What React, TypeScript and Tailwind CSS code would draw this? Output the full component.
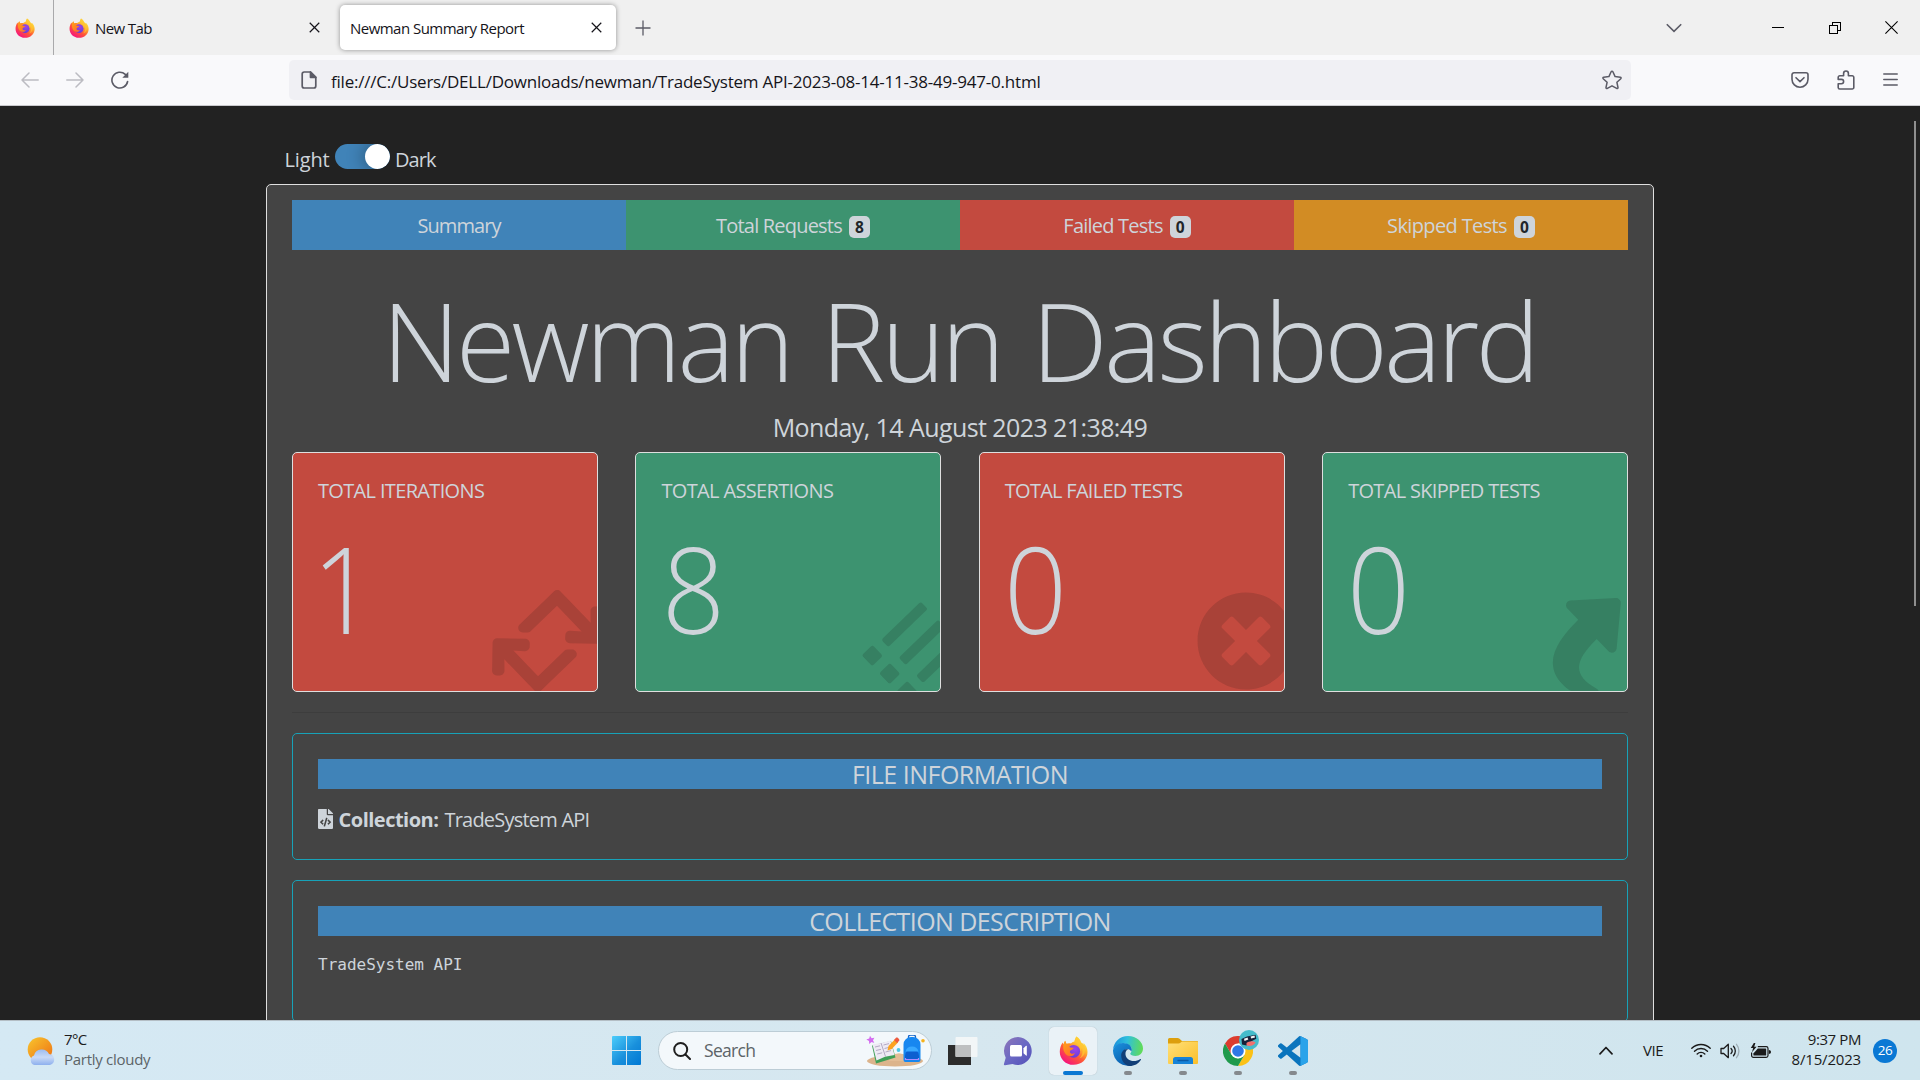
import React from 'react';
import { FaFileCode, FaList, FaRetweet, FaShare, FaTimesCircle } from 'react-icons/fa';

type IconProps = { className?: string };

function FirefoxLogo({ id, className = '' }: IconProps & { id: string }) {
  return (
    <svg viewBox="0 0 30 30" className={className}>
      <defs>
        <linearGradient id={`${id}-body`} x1="0.85" y1="0.1" x2="0.25" y2="0.95">
          <stop offset="0" stopColor="#fff44f" />
          <stop offset="0.3" stopColor="#ffb52e" />
          <stop offset="0.6" stopColor="#ff5a36" />
          <stop offset="1" stopColor="#f5157c" />
        </linearGradient>
        <linearGradient id={`${id}-fox`} x1="0" y1="0" x2="1" y2="1">
          <stop offset="0" stopColor="#ffa21a" />
          <stop offset="1" stopColor="#ff6a2b" />
        </linearGradient>
        <radialGradient id={`${id}-globe`} cx="0.6" cy="0.3" r="0.8">
          <stop offset="0" stopColor="#a142e8" />
          <stop offset="1" stopColor="#5b3fd6" />
        </radialGradient>
      </defs>
      <path
        fill={`url(#${id}-body)`}
        d="M18 .6c2.800 1.700 4.200 3.900 4.900 6.300 1.200.5 2.100 1.400 2.800 2.400-.1-.9-.3-1.500-.4-2.200 2.500 2.400 4.200 5.800 4.200 9.400C29.500 24 23.200 29.800 15 29.800S.8 23.700.8 16.200c0-3.700 1.200-7.200 3-9.600l.7 2.200L6.300 5l1.500 3.300c1.500-.7 3-.8 4.500-.5C13.500 6.500 15 6 16 5.800 16.200 4 17 2 18 .6z"
      />
      <circle cx="15.200" cy="15.800" r="6.600" fill={`url(#${id}-globe)`} />
      <path
        fill={`url(#${id}-fox)`}
        d="M4.500 8.800 6.300 5l1.600 3.200c1.600-.7 3.200-.6 4.700 0-1.200.7-2 1.700-2.100 2.800.8.9 2.700.9 4.700 1.100-.3 1.500-2 2.100-3.400 2.900-.6.500-.4 1.400-.5 2 1.300 1.600 3.400 1.700 5.200.5-1 2.600-3.200 3.700-5.400 3.300-4.700-.6-7.500-5.700-6.600-12z"
      />
      <path
        fill="#ffc531"
        d="M16 5.800c3.800 1.500 6.400 5 6.100 9.700 1.100-1.200 1.500-2.500 1.500-3.800 1.700 4.300.6 9-2.500 11.600 5.200-2 6.700-7.200 5.400-12.500-.9-2.300-2.300-3.500-3.800-4.300C22 4.200 20.500 2 18 .6 17 2.300 16.300 4 16 5.800z"
        opacity="0.75"
      />
    </svg>
  );
}

function CrossIcon({ className = '' }: IconProps) {
  return (
    <svg viewBox="0 0 12 12" className={className} fill="none" stroke="currentColor" strokeWidth="1.300">
      <path d="M.8.8l10.400 10.400M11.200.8.8 11.200" />
    </svg>
  );
}

function TabStrip() {
  return (
    <div className="flex h-[55px] items-center bg-[#f0f0f0] text-[15px] text-[#15141a]">
      <div className="flex h-full w-[54px] items-center border-r border-[#a9a9ab] pl-[15px]">
        <FirefoxLogo id="ff-pin" className="size-5" />
      </div>
      <div className="flex h-full w-[286px] items-center pl-[15px] pr-[20px]">
        <FirefoxLogo id="ff-tab" className="size-5" />
        <span className="ml-[6px] pt-[2px] tracking-[-0.6px]">New Tab</span>
        <CrossIcon className="ml-auto size-[11px]" />
      </div>
      <div className="flex h-[45px] w-[276px] items-center rounded-[5px] bg-white pl-[10px] pr-[14px] shadow-[0_0_5px_rgba(0,0,0,0.4)]">
        <span className="pt-[2px] tracking-[-0.53px]">Newman Summary Report</span>
        <CrossIcon className="ml-auto size-[11px]" />
      </div>
      <svg viewBox="0 0 16 16" className="ml-[19px] size-4" fill="none" stroke="#5b5b66" strokeWidth="1.300">
        <path d="M8 .5v15M.5 8h15" />
      </svg>
      <div className="ml-auto flex items-center pr-[22px]">
        <svg viewBox="0 0 16 10" className="mr-[90px] h-[10px] w-4" fill="none" stroke="#5b5b66" strokeWidth="1.600">
          <path d="M.8 1.200 8 8.400l7.200-7.200" />
        </svg>
        <svg viewBox="0 0 12 12" className="mr-[45px] size-3" fill="none" stroke="#000" shapeRendering="crispEdges">
          <path d="M0 5.500h12" />
        </svg>
        <svg viewBox="0 0 12 12" className="mr-[44px] size-3" fill="none" stroke="#000" shapeRendering="crispEdges">
          <path d="M.5 3.500h8v8h-8zM3.500 3V.5h8v8H9" />
        </svg>
        <svg viewBox="0 0 13 13" className="size-[13px]" fill="none" stroke="#000" strokeWidth="1.100">
          <path d="M.4.4l12.200 12.200M12.600.4.4 12.600" />
        </svg>
      </div>
    </div>
  );
}

function AddressRow() {
  return (
    <div className="flex h-[51px] items-center border-b border-[#c9c9cd] bg-[#f9f9fb] pl-[21px] text-[#5b5b66]">
      <svg viewBox="0 0 18 18" className="size-[18px] text-[#bcbcc2]" fill="none" stroke="currentColor" strokeWidth="1.500" strokeLinecap="round" strokeLinejoin="round">
        <path d="M17.200 9H1M8 2 1 9l7 7" />
      </svg>
      <svg viewBox="0 0 18 18" className="ml-[27px] size-[18px] text-[#bcbcc2]" fill="none" stroke="currentColor" strokeWidth="1.500" strokeLinecap="round" strokeLinejoin="round">
        <path d="M.8 9H17M10 2l7 7-7 7" />
      </svg>
      <svg viewBox="0 0 18 18" className="ml-[27px] size-[18px]" fill="none" stroke="currentColor" strokeWidth="1.600" strokeLinecap="round">
        <path d="M16.600 10.500A7.900 7.900 0 1 1 14.300 3.400" />
        <path d="M17.300.8v5.900h-6z" fill="currentColor" stroke="none" />
      </svg>
      <div className="ml-[160px] flex h-10 w-[1342px] items-center rounded-[5px] bg-[#f0f0f4] pl-3 pr-[9px]">
        <svg viewBox="0 0 16 18" className="h-[18px] w-4 shrink-0" fill="none" stroke="currentColor" strokeWidth="1.700" strokeLinejoin="round">
          <path d="M9.500 1H3.200A2 2 0 0 0 1.200 3v12a2 2 0 0 0 2 2h9.600a2 2 0 0 0 2-2V6.300z" />
          <path d="M9.500 1v5.300h5.300z" fill="currentColor" />
        </svg>
        <span className="ml-[14px] whitespace-nowrap pt-[3px] text-[17px] tracking-[-0.22px] text-[#15141a]">
          file:///C:/Users/DELL/Downloads/newman/TradeSystem API-2023-08-14-11-38-49-947-0.html
        </span>
        <svg viewBox="0 0 20 20" className="ml-auto size-5 shrink-0" fill="none" stroke="currentColor" strokeWidth="1.500" strokeLinejoin="round">
          <path d="M10 1.200c.4 0 .7.2.9.600l2.200 4.800 5.200.6c.8.100 1.100 1 .5 1.500l-3.900 3.600 1.100 5.200c.1.800-.7 1.300-1.300.9L10 15.800l-4.700 2.600c-.6.400-1.400-.1-1.300-.9l1.100-5.200-3.900-3.600C.6 8.200.9 7.300 1.700 7.200l5.200-.6L9.100 1.800c.2-.4.5-.6.9-.6z" />
        </svg>
      </div>
      <div className="ml-auto flex items-center pr-[22px]">
        <svg viewBox="0 0 18 18" className="mr-[28px] size-[18px]" fill="none" stroke="currentColor" strokeWidth="1.600" strokeLinecap="round" strokeLinejoin="round">
          <path d="M3 1.800h12a2 2 0 0 1 2 2v4.400a8 8 0 0 1-16 0V3.800a2 2 0 0 1 2-2z" />
          <path d="M5 6.700l4 3.900 4-3.900" />
        </svg>
        <svg viewBox="0 0 18 20" className="mr-[28px] h-5 w-[18px]" fill="none" stroke="currentColor" strokeWidth="1.600" strokeLinejoin="round">
          <path d="M6.600 5.800V3.400a2.400 2.400 0 0 1 4.800 0v2.400h3.800a1.600 1.600 0 0 1 1.600 1.600v10a1.600 1.600 0 0 1-1.600 1.600H2.800a1.600 1.600 0 0 1-1.600-1.600v-3.600h3.200a2.200 2.200 0 0 0 0-4.400H1.200V7.400a1.600 1.600 0 0 1 1.600-1.600z" />
        </svg>
        <svg viewBox="0 0 15 14" className="h-[14px] w-[15px]" fill="none" stroke="currentColor" strokeWidth="1.500" strokeLinecap="round">
          <path d="M.8 1h13.400M.8 6.500h13.400M.8 12h13.400" />
        </svg>
      </div>
    </div>
  );
}

const tabs = [
  { label: 'Summary', bg: 'bg-[#4083b8]', tracking: 'tracking-[-0.93px]' },
  { label: 'Total Requests', count: '8', bg: 'bg-[#3d9370]', tracking: 'tracking-[-0.8px]' },
  { label: 'Failed Tests', count: '0', bg: 'bg-[#c34a3f]', tracking: 'tracking-[-0.78px]' },
  { label: 'Skipped Tests', count: '0', bg: 'bg-[#d28c24]', tracking: 'tracking-[-0.63px]' },
];

const stats = [
  { label: 'TOTAL ITERATIONS', value: '1', bg: 'bg-[#c34a3f]', tracking: 'tracking-[-0.66px]', Icon: FaRetweet, icon: 'right-[-13.5px] h-[100px] w-[125px] rotate-[-44deg]', nudge: '-ml-[6px]' },
  { label: 'TOTAL ASSERTIONS', value: '8', bg: 'bg-[#3d9370]', tracking: 'tracking-[-0.64px]', Icon: FaList, icon: 'right-[-12.5px] size-[80px] rotate-[-44deg]', nudge: 'ml-[1px]' },
  { label: 'TOTAL FAILED TESTS', value: '0', bg: 'bg-[#c34a3f]', tracking: 'tracking-[-0.72px]', Icon: FaTimesCircle, icon: 'right-[-12.5px] size-[100px]', nudge: '-ml-px' },
  { label: 'TOTAL SKIPPED TESTS', value: '0', bg: 'bg-[#3d9370]', tracking: 'tracking-[-0.68px]', Icon: FaShare, icon: 'right-[-12.5px] size-[100px] rotate-[-44deg]', nudge: '-ml-px' },
];

function Report() {
  return (
    <div className="relative h-[914px] overflow-hidden bg-[#222222] pt-[38px] text-[20px] text-[#ced4da]">
      <div className="absolute right-[4px] top-[15px] h-[485px] w-[2px] bg-[#8f8f8f]" />
      <div className="flex h-[30px] pl-[284.5px] leading-[32px]">
        <span className="w-[50.5px] tracking-[-0.15px]">Light</span>
        <div className="flex h-[25px] w-[55px] justify-end overflow-hidden rounded-full bg-[#4083b8]">
          <div className="size-[25px] rounded-full bg-white shadow-[-2px_0_15px_2px_rgba(0,0,0,0.25)]" />
        </div>
        <span className="ml-[5px] tracking-[-0.9px]">Dark</span>
      </div>
      <div className="mx-[266px] mt-[10px] h-[1200px] rounded-[5px] border border-[#dfdfdf] bg-[#444444] px-[25px] pt-[15px]">
        <nav className="grid h-[50px] grid-cols-4">
          {tabs.map((tab) => (
            <div key={tab.label} className={`flex items-center justify-center leading-[30px] ${tab.bg}`}>
              <span className={`pt-[2px] ${tab.tracking}`}>{tab.label}</span>
              {tab.count && (
                <span className="ml-[7px] mt-[4px] flex h-[22px] w-[21px] items-center justify-center rounded-[5px] bg-[#ced4da] text-[15.5px] font-bold text-[#212529]">
                  {tab.count}
                </span>
              )}
            </div>
          ))}
        </nav>
        <h1 className="mt-[25px] h-[130px] whitespace-nowrap pr-[2px] text-center text-[108px] font-light leading-[131px] tracking-[-3.8px] [word-spacing:6px]">
          Newman Run Dashboard
        </h1>
        <p className="mt-[7px] text-center text-[25px] leading-[30px] tracking-[-0.58px]">Monday, 14 August 2023 21:38:49</p>
        <div className="mt-[10px] grid grid-cols-4 gap-[37.5px]">
          {stats.map(({ label, value, bg, tracking, Icon, icon, nudge }) => (
            <div key={label} className={`relative h-[240px] overflow-hidden rounded-[5px] border border-[#dfdfdf] pl-[25px] pt-[23px] ${bg}`}>
              <h6 className={`leading-[30px] ${tracking}`}>{label}</h6>
              <div className={`mt-[10px] origin-left scale-x-[0.92] text-[120px] font-light leading-[144px] ${nudge}`}>{value}</div>
              <Icon className={`absolute bottom-0 text-[rgba(20,20,20,0.15)] ${icon}`} />
            </div>
          ))}
        </div>
        <div className="mt-[20px] h-px bg-[#3d3d3d]" />
        <section className="mt-[20px] h-[127px] rounded-[5px] border border-[#17a2b8] px-[25px] pt-[25px]">
          <h5 className="h-[30px] bg-[#4083b8] text-center text-[25px] leading-[30px] tracking-[-0.5px]">FILE INFORMATION</h5>
          <div className="mt-[15px] flex h-[30px] items-center leading-[30px]">
            <FaFileCode className="h-5 w-[15px]" />
            <strong className="ml-[5.5px] pt-[2px] font-bold tracking-[-0.5px]">Collection:</strong>
            <span className="ml-[6px] pt-[2px] tracking-[-0.78px]">TradeSystem API</span>
          </div>
        </section>
        <section className="mt-[20px] h-[142px] rounded-[5px] border border-[#17a2b8] px-[25px] pt-[25px]">
          <h5 className="h-[30px] bg-[#4083b8] text-center text-[25px] leading-[30px] tracking-[-0.58px]">COLLECTION DESCRIPTION</h5>
          <pre className="mt-[16px] font-['DejaVu_Sans_Mono',monospace] text-[16px] leading-[26px]">TradeSystem API</pre>
        </section>
      </div>
    </div>
  );
}

function WeatherIcon() {
  return (
    <svg viewBox="0 0 29 28" className="h-7 w-[29px]">
      <defs>
        <linearGradient id="sun" x1="0.1" y1="0.1" x2="0.8" y2="0.9">
          <stop offset="0" stopColor="#f7bd2b" />
          <stop offset="1" stopColor="#ef7a16" />
        </linearGradient>
        <linearGradient id="cloud" x1="0" y1="0" x2="0" y2="1">
          <stop offset="0" stopColor="#9dbcf0" />
          <stop offset="0.5" stopColor="#c9daf6" />
          <stop offset="1" stopColor="#8eb0ee" />
        </linearGradient>
      </defs>
      <circle cx="13" cy="12.500" r="12.300" fill="url(#sun)" />
      <path fill="url(#cloud)" d="M7.500 28a5 5 0 0 1-.5-9.500 8 8 0 0 1 15-1.500A5.600 5.600 0 0 1 23 28z" />
    </svg>
  );
}

function StartIcon() {
  return (
    <svg viewBox="0 0 29 29" className="size-[29px]">
      <defs>
        <linearGradient id="start" x1="0" y1="0" x2="1" y2="1">
          <stop offset="0" stopColor="#4ccdfb" />
          <stop offset="0.550" stopColor="#1990dc" />
          <stop offset="1" stopColor="#0078d4" />
        </linearGradient>
      </defs>
      <path fill="url(#start)" d="M1 0h13v13.900H0V1a1 1 0 0 1 1-1zM15 0h13a1 1 0 0 1 1 1v12.900H15zM0 14.900h14V29H1a1 1 0 0 1-1-1zM15 14.900h14V28a1 1 0 0 1-1 1H15z" />
    </svg>
  );
}

function SearchArt() {
  return (
    <svg viewBox="0 0 60 32" className="h-8 w-[60px]">
      <ellipse cx="30" cy="26" rx="28" ry="5.500" fill="#dcb48c" />
      <path d="M22 20.500 34 18.200 52 22v4H24z" fill="#e3bd96" />
      <path d="M7 10.500 26 6l4.500 16.500-19.500 6z" fill="#3f9f57" />
      <path d="M7.500 9.500 16 8l9.500-2.500 4 14.500-9.500 1.800-8.500 3.800z" fill="#eeeaf4" />
      <path d="M16 8l4.500 13.500M10 12l5-1.200M11 15.500l5-1.200M12.200 19l5-1.200M18.500 10l5.500-1.400M19.500 13.500l5.500-1.400M20.500 17l5.500-1.400" stroke="#a49ab8" strokeWidth="0.800" fill="none" />
      <path d="M22.500 15.500l1-4.500L30 4.200l3.200 3-6.400 6.800z" fill="#fca321" />
      <path d="M29 5l2-2.200c1.300-1 4 1.500 3.200 3L32 8z" fill="#ee5b3f" />
      <path d="M5 .8l1.600 2.400 2.800-.5L8 5.300l1.300 2.600-2.800-.8L4.200 9 4 6 1.300 4.600l2.900-1z" fill="#d36cf0" />
      <circle cx="33.500" cy="15" r="1.900" fill="#4cc9e8" />
      <circle cx="58" cy="5.800" r="1.800" fill="#f6b21b" />
      <path d="M43.500 3V1.800A2 2 0 0 1 45.500 0h3a2 2 0 0 1 2 1.800V3" fill="none" stroke="#1464c8" strokeWidth="1.300" />
      <path d="M38.500 9.500A7.500 7.500 0 0 1 46 2h2a7.500 7.500 0 0 1 7.500 7.500V25a2 2 0 0 1-2 2h-13a2 2 0 0 1-2-2z" fill="#1787f0" />
      <path d="M40 21a7 7 0 0 1 14 0v3.500H40z" fill="#0d5fd0" />
      <path d="M40.500 16.500a6.700 6.700 0 0 1 13 0" fill="#37a8ff" />
      <path d="M40.500 23v1.500h13V23" fill="none" stroke="#a98bff" strokeWidth="1.200" />
    </svg>
  );
}

function TaskViewIcon() {
  return (
    <svg viewBox="0 0 30 30" className="size-[30px]">
      <path fill="#2c2c2c" d="M0 9h23v20H0z" />
      <rect x="7.500" y="1" width="22" height="20" rx="1" fill="#f4f6f7" opacity="0.930" />
      <path fill="#bdbfc0" d="M7.500 9H23v12H8.500a1 1 0 0 1-1-1z" />
    </svg>
  );
}

function ChatIcon() {
  return (
    <svg viewBox="0 0 30 30" className="size-[30px]">
      <defs>
        <linearGradient id="chat" x1="0" y1="0" x2="1" y2="1">
          <stop offset="0" stopColor="#8f77b8" />
          <stop offset="0.500" stopColor="#6a68c4" />
          <stop offset="1" stopColor="#5350b8" />
        </linearGradient>
      </defs>
      <path fill="url(#chat)" d="M15 1a14 14 0 1 1-5.500 27L2 29.200c-1 .1-1.400-.6-1-1.500l1.700-6A14 14 0 0 1 15 1z" />
      <rect x="7" y="9" width="12" height="11.500" rx="1.500" fill="#fff" />
      <path fill="#fff" d="M20.500 12.300 23 9.800c.4-.3.800-.1.800.4v9c0 .5-.4.700-.8.400l-2.500-2.400z" />
    </svg>
  );
}

function EdgeIcon() {
  return (
    <svg viewBox="0 0 30 30" className="size-[30px]">
      <defs>
        <linearGradient id="edge-top" x1="0" y1="0.400" x2="1" y2="0.500">
          <stop offset="0" stopColor="#1a8fdc" />
          <stop offset="0.450" stopColor="#2fc0dc" />
          <stop offset="1" stopColor="#62dc55" />
        </linearGradient>
        <linearGradient id="edge-mid" x1="0" y1="0" x2="0.600" y2="1">
          <stop offset="0" stopColor="#1b93df" />
          <stop offset="1" stopColor="#0b5cab" />
        </linearGradient>
      </defs>
      <path fill="url(#edge-top)" d="M0 14C.6 6 6.800 0 15 0c8.500 0 15 6 15 12.500 0 4.500-3.300 7.500-7.500 7.500-3 0-5.300-1-5.300-2.200 0-.7 1.600-1.600 1.600-4.300C18.800 10 15 7.500 10.500 7.500 5.500 7.500 1.500 10 0 14z" />
      <path fill="url(#edge-mid)" d="M0 14.500C.8 10 5 7 10 7c5 0 8.800 2.800 8.800 6.500 0 .8-.2 1.500-.5 2-.8-1.600-2.300-2.500-4-2.500-2.500 0-4 2.500-4 5.500 0 5 4 9.500 10 10.200A15 15 0 0 1 0 14.500z" />
      <path fill="#123f78" d="M15.200 13c-2 1-3 3-2.700 5.500.5 4 4 6.500 8.200 6.500 2.500 0 4.800-.8 6.200-1.800.8-.4 1.300.1.900.8C25.500 27.800 21.500 30 16.500 30c-4-.3-8.300-5-8.300-10.500 0-3.800 2.800-6.900 7-6.500z" />
    </svg>
  );
}

function ExplorerIcon() {
  return (
    <svg viewBox="0 0 30 30" className="size-[30px]">
      <defs>
        <linearGradient id="folder" x1="0" y1="0" x2="1" y2="1">
          <stop offset="0" stopColor="#ffe07a" />
          <stop offset="1" stopColor="#fbbf2a" />
        </linearGradient>
      </defs>
      <path fill="#dd9f0d" d="M0 3.500A1.500 1.500 0 0 1 1.500 2h8c.7 0 1.200.2 1.700.6L14 5h15a1 1 0 0 1 1 1v8H0z" />
      <path fill="url(#folder)" d="M0 7.500h10.500c.8 0 1.300-.2 1.900-.7L14 5.500h15a1 1 0 0 1 1 1V27a1 1 0 0 1-1 1H1a1 1 0 0 1-1-1z" />
      <path fill="#1783d8" d="M5 28v-4.500A2.500 2.500 0 0 1 7.500 21h15a2.500 2.500 0 0 1 2.500 2.500V28z" />
      <path d="M10 24.500h10" stroke="#0c5aa5" strokeWidth="1.300" strokeLinecap="round" />
    </svg>
  );
}

function ChromeIcon() {
  return (
    <div className="relative size-[30px]">
      <svg viewBox="0 0 30 30" className="size-[30px]">
        <path fill="#dc3c2e" d="M15 15 2 7.500A15 15 0 0 1 28 7.500H15z" />
        <path fill="#dc3c2e" d="M2 7.500 8.500 18.800 15 7.500z" />
        <path fill="#fbc116" d="M28 7.500A15 15 0 0 1 15 30l6.500-11.200L15 7.500z" />
        <path fill="#1f9a4c" d="M15 30A15 15 0 0 1 2 7.500l6.500 11.300L15 22.500l6.500-3.700z" />
        <circle cx="15" cy="15" r="7.500" fill="#fff" />
        <circle cx="15" cy="15" r="5.800" fill="#2f78e6" />
      </svg>
      <svg viewBox="0 0 20 20" className="absolute left-[16px] top-[-6px] size-5">
        <circle cx="10" cy="10" r="10" fill="#45bccb" />
        <path fill="#16213a" d="M2.500 9 8 6.500l8.500-1.800.8 4-5.300 2.800-4.500 4-4.500-1z" />
        <path fill="#f3f4f5" d="M5 8.800 8.500 7.500l.8 2-3.800 1.500zM11.500 6.500l4-1 .5 2-3.800 1z" />
        <path fill="#f0706e" d="M7.500 13c2-2 6.500-2.600 9-.8-.8 3.200-5.500 4.500-9 3.300z" />
      </svg>
    </div>
  );
}

function CodeIcon() {
  return (
    <svg viewBox="0 0 24 24" className="size-[30px]">
      <path
        fill="#0a74bd"
        d="M23.150 2.587 18.210.210a1.494 1.494 0 0 0-1.705.290l-9.460 8.630-4.120-3.128a.999.999 0 0 0-1.276.057L.327 7.261A1 1 0 0 0 .326 8.740L3.899 12 .326 15.260a1 1 0 0 0 .001 1.479L1.650 17.940a.999.999 0 0 0 1.276.057l4.120-3.128 9.460 8.630a1.492 1.492 0 0 0 1.704.290l4.942-2.377A1.500 1.500 0 0 0 24 20.060V3.939a1.500 1.500 0 0 0-.850-1.352zm-5.146 14.861L10.826 12l7.178-5.448v10.896z"
      />
      <path fill="#2aa3ea" d="M18.004 0.150 23.150 2.587A1.500 1.500 0 0 1 24 3.939V20.060a1.500 1.500 0 0 1-.850 1.352L18.210 23.789 18.004 23.850z" />
    </svg>
  );
}

function TaskTile({ children, state }: { children: React.ReactNode; state?: 'active' | 'open' }) {
  return (
    <div className={`relative flex size-12 items-center justify-center rounded-[5px] ${state === 'active' ? 'bg-[#eaf2f7] shadow-[0_0_1px_rgba(0,0,0,0.25)]' : ''}`}>
      {children}
      {state === 'active' && <div className="absolute bottom-0 left-[14px] h-1 w-5 rounded-full bg-[#0b78d3]" />}
      {state === 'open' && <div className="absolute bottom-0 left-5 h-1 w-2 rounded-full bg-[#85898d]" />}
    </div>
  );
}

function Taskbar() {
  return (
    <div className="flex h-[60px] items-center border-t border-[#b4bec5] bg-linear-to-r from-[#d5e9f4] via-[#d6e7ef] to-[#cfe5ee] text-[15px] text-[#1b1b1b]">
      <div className="flex w-[612px] items-center pl-[27px]">
        <WeatherIcon />
        <div className="ml-[8px] pb-[4px] leading-[20px]">
          <div className="tracking-[-0.6px]">7°C</div>
          <div className="tracking-[-0.28px] text-[#5c6468]">Partly cloudy</div>
        </div>
      </div>
      <StartIcon />
      <div className="ml-[17px] flex h-[39px] w-[274px] items-center rounded-full border border-[#bccdd6] bg-[#f3f8fb] pl-[14px] pr-[6px]">
        <svg viewBox="0 0 18 18" className="size-[18px]" fill="none" stroke="#1f1f1f" strokeWidth="2" strokeLinecap="round">
          <circle cx="7.700" cy="7.500" r="6.500" />
          <path d="M12.500 12.500 17 17" />
        </svg>
        <span className="ml-[13px] pb-px text-[17.5px] leading-[24px] tracking-[-0.7px] text-[#5c6468]">Search</span>
        <div className="ml-auto">
          <SearchArt />
        </div>
      </div>
      <div className="ml-[7px] flex gap-[7px]">
        <TaskTile><TaskViewIcon /></TaskTile>
        <TaskTile><ChatIcon /></TaskTile>
        <TaskTile state="active"><FirefoxLogo id="ff-task" className="size-[29px]" /></TaskTile>
        <TaskTile state="open"><EdgeIcon /></TaskTile>
        <TaskTile state="open"><ExplorerIcon /></TaskTile>
        <TaskTile state="open"><ChromeIcon /></TaskTile>
        <TaskTile state="open"><CodeIcon /></TaskTile>
      </div>
      <div className="ml-auto flex items-center pr-[23px]">
        <svg viewBox="0 0 14 9" className="h-[9px] w-[14px]" fill="none" stroke="#1b1b1b" strokeWidth="1.700" strokeLinecap="round" strokeLinejoin="round">
          <path d="M1 7.800 7 1.500l6 6.300" />
        </svg>
        <span className="ml-[30px] w-[48px] pb-px tracking-[-0.5px]">VIE</span>
        <svg viewBox="0 0 20 15" className="h-[15px] w-5" fill="none" stroke="#1b1b1b" strokeWidth="1.400" strokeLinecap="round">
          <path d="M.8 5.300a13 13 0 0 1 18.400 0M3.500 8.200a9.200 9.200 0 0 1 13 0M6.200 10.900a5.400 5.400 0 0 1 7.600 0" />
          <circle cx="10" cy="13" r="1.300" fill="#1b1b1b" stroke="none" />
        </svg>
        <svg viewBox="0 0 21 16" className="ml-[9px] h-4 w-[21px]" fill="none" stroke="#1b1b1b" strokeWidth="1.300" strokeLinecap="round" strokeLinejoin="round">
          <path d="M1 5.500h2.700L8.300 1.300v13.400l-4.600-4.200H1z" />
          <path d="M11 5.500a3.600 3.600 0 0 1 0 5M13.500 3.300a7 7 0 0 1 0 9.400" />
          <path d="M16.500 1.300a10.500 10.500 0 0 1 0 13.400" stroke="#9fadb5" />
        </svg>
        <svg viewBox="0 0 22 16" className="ml-[9px] h-4 w-[22px]" fill="none" stroke="#1b1b1b" strokeWidth="1.200" strokeLinejoin="round">
          <path d="M7.800 3.600h8.400a1.800 1.800 0 0 1 1.800 1.800v7.200a1.800 1.800 0 0 1-1.800 1.800H3.400a1.800 1.800 0 0 1-1.800-1.800V9.500" />
          <path d="M7.800 5.400h7.800a.6.600 0 0 1 .6.600v6a.6.600 0 0 1-.6.600H4a.6.600 0 0 1-.6-.6v-1.500z" fill="#1b1b1b" stroke="none" />
          <path d="M18.800 7v4c1.300 0 2.200-.9 2.200-2s-.9-2-2.200-2z" fill="#1b1b1b" stroke="none" />
          <path d="M3.800 0 .8 5h2.300L2 9.200 6.600 3.800H4.200L5.400 0z" fill="#1b1b1b" stroke="none" />
        </svg>
        <div className="ml-[16px] w-[73px] pb-[4px] text-right leading-[20px]">
          <div className="tracking-[-0.4px]">9:37 PM</div>
          <div className="tracking-[-0.18px]">8/15/2023</div>
        </div>
        <div className="ml-[12px] flex size-6 items-center justify-center rounded-full bg-[#0a78d4] pb-px text-[13.500px] tracking-[-0.5px] text-white">26</div>
      </div>
    </div>
  );
}

export default function App() {
  return (
    <div className="flex h-[1080px] w-[1920px] flex-col overflow-hidden font-['Open_Sans',sans-serif]">
      <TabStrip />
      <AddressRow />
      <Report />
      <Taskbar />
    </div>
  );
}
